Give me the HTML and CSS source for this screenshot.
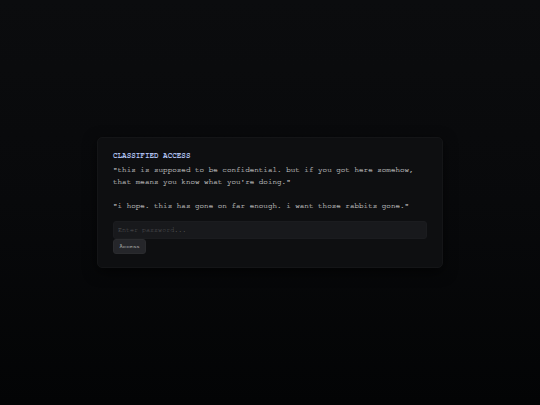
FILE: index.html
```html
<!DOCTYPE html>
<html>
<head>
<meta charset="utf-8">
<link rel="stylesheet" href="styles.css">
</head>
<body>
<main class="page">
  <section class="card">
    <h1 class="title">CLASSIFIED ACCESS</h1>
    <p class="note">"this is supposed to be confidential. but if you got here somehow,<br>that means you know what you're doing."<br><br>"i hope. this has gone on far enough. i want those rabbits gone."</p>
    <input class="pass" type="password" placeholder="Enter password...">
    <button class="btn" type="button">Access</button>
  </section>
</main>
</body>
</html>
```
FILE: styles.css
```css
html, body {
  margin: 0;
  padding: 0;
  height: 100%;
}
body {
  background: linear-gradient(180deg, #0b0c0e 0%, #08090b 50%, #030405 100%);
  font-family: "Nimbus Mono PS", "Nimbus Mono L", "FreeMono", Courier, "Courier New", "Liberation Mono", monospace;
}
.page {
  height: 405px;
  display: flex;
  align-items: center;
  justify-content: center;
}
.card {
  width: 346px;
  box-sizing: border-box;
  padding: 13px 15px 13px;
  background: #0e0f11;
  border: 1px solid #141517;
  border-radius: 5px;
  box-shadow: 0 4px 14px rgba(0,0,0,0.6);
  display: flex;
  flex-direction: column;
  align-items: flex-start;
}
.title {
  margin: 0 0 3px;
  font-size: 7.6px;
  line-height: 10px;
  font-weight: bold;
  color: #aabde9;
}
.note {
  margin: 0 0 9px;
  font-size: 7.6px;
  line-height: 12px;
  color: #acacac;
  -webkit-text-stroke: 0.2px #acacac;
}
.pass {
  width: 100%;
  box-sizing: border-box;
  height: 18px;
  margin: 0;
  padding: 0 4px;
  background: #18191c;
  border: 1px solid #1b1c1f;
  border-radius: 3px;
  color: #bbb;
  font-family: inherit;
  font-size: 6.7px;
  outline: none;
}
.pass::placeholder {
  color: #56575a;
}
.btn {
  height: 15px;
  margin: 0;
  padding: 0 5.5px;
  background: #25262a;
  border: 1px solid #2a2b2e;
  border-radius: 3px;
  color: #a6a6a6;
  font-family: inherit;
  font-size: 5.6px;
  -webkit-text-stroke: 0.15px #a6a6a6;
}
```
